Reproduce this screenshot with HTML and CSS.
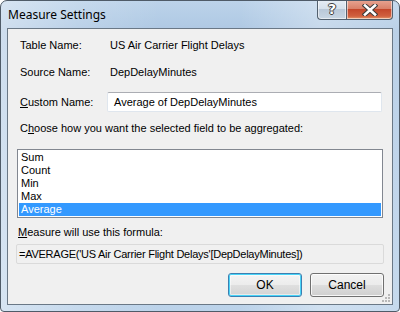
FILE: index.html
```html
<!DOCTYPE html>
<html>
<head>
  <meta name="viewport" content="width=device-width, initial-scale=1">
  <link rel="stylesheet" href="styles.css">
</head>
<body>

  <!-- Dialog window -->
  <div class="window">

    <!-- Title bar -->
    <div class="titlebar">
      <span class="title">Measure Settings</span>
      <div class="caption-buttons">
        <div class="cap-btn help-btn">?</div>
        <div class="cap-btn close-btn">
          <svg width="16" height="12" viewBox="0 0 16 12">
            <path d="M3 1.5 L13 10.5 M13 1.5 L3 10.5" stroke="#3b3b3b" stroke-width="4.6" stroke-linecap="square"/>
            <path d="M3 1.5 L13 10.5 M13 1.5 L3 10.5" stroke="#fff" stroke-width="2.6" stroke-linecap="square"/>
          </svg>
        </div>
      </div>
    </div>

    <!-- Client area -->
    <div class="client">
      <div class="info-row">
        <span class="label">Table Name:</span>
        <span class="value">US Air Carrier Flight Delays</span>
      </div>
      <div class="info-row">
        <span class="label">Source Name:</span>
        <span class="value">DepDelayMinutes</span>
      </div>
      <div class="custom-row">
        <span class="label"><u>C</u>ustom Name:</span>
        <div class="textbox">Average of DepDelayMinutes</div>
      </div>

      <div class="prompt">C<u>h</u>oose how you want the selected field to be aggregated:</div>
      <ul class="listbox">
        <li>Sum</li>
        <li>Count</li>
        <li>Min</li>
        <li>Max</li>
        <li class="selected">Average</li>
      </ul>

      <div class="formula-label"><u>M</u>easure will use this formula:</div>
      <div class="formula">=AVERAGE('US Air Carrier Flight Delays'[DepDelayMinutes])</div>

      <div class="buttons">
        <div class="btn default">OK</div>
        <div class="btn">Cancel</div>
      </div>

      <!-- Resize grip -->
      <svg class="grip" width="9" height="9" viewBox="0 0 9 9">
        <g fill="#b8b8b8">
          <rect x="7" y="1" width="2" height="2"/>
          <rect x="4" y="4" width="2" height="2"/>
          <rect x="7" y="4" width="2" height="2"/>
          <rect x="1" y="7" width="2" height="2"/>
          <rect x="4" y="7" width="2" height="2"/>
          <rect x="7" y="7" width="2" height="2"/>
        </g>
      </svg>
    </div>
  </div>

</body>
</html>
```

FILE: styles.css
```css
/* =====================
   BASIC
   ===================== */
body {
  margin: 0;
  background: #fff;
  font-family: "Liberation Sans", Arial, sans-serif;
  font-size: 11px;
  color: #000;
}
* {
  box-sizing: border-box;
}

/* =====================
   WINDOW FRAME
   ===================== */
.window {
  width: 400px;
  height: 312px;
  border: 1px solid #4f5b68;
  border-radius: 7px 7px 4px 4px;
  padding: 0 6px 6px 6px;
  display: flex;
  flex-direction: column;
  background:
    linear-gradient(90deg, rgba(255,255,255,0.4) 0%, rgba(255,255,255,0.15) 20%, rgba(255,255,255,0) 40%, rgba(255,255,255,0) 60%, rgba(255,255,255,0.3) 80%, rgba(255,255,255,0.15) 100%),
    linear-gradient(180deg, #bcd3ea 0%, #aec8e3 30px, #bcd3ea 100%);
  overflow: hidden;
}

.titlebar {
  height: 27px;
  display: flex;
  justify-content: space-between;
  align-items: flex-start;
}
.title {
  font-family: "Noto Sans", "Open Sans", sans-serif;
  font-size: 12px;
  line-height: 16px;
  margin-top: 6px;
  margin-left: 1px;
  color: #000;
}

.caption-buttons {
  display: flex;
  margin-top: -1px;
}
.cap-btn {
  height: 20px;
  border: 1px solid #52606e;
  border-top: none;
  display: flex;
  align-items: center;
  justify-content: center;
  box-shadow: inset 0 0 0 1px rgba(255,255,255,0.55);
}
.help-btn {
  width: 29px;
  border-radius: 0 0 0 4px;
  border-right: none;
  background: linear-gradient(180deg, #e6edf5 0%, #d6e1ec 45%, #b9c8d8 50%, #c9d6e3 100%);
  font-family: "DejaVu Sans", sans-serif;
  font-weight: bold;
  font-size: 14px;
  color: #fff;
  text-shadow: 0 0 1px #333, 1px 0 0 #444, -1px 0 0 #444, 0 1px 0 #444, 0 -1px 0 #444;
  padding-bottom: 1px;
}
.close-btn {
  width: 47px;
  border-radius: 0 0 4px 0;
  background: linear-gradient(180deg, #e8a593 0%, #d9816a 45%, #c4472b 50%, #d0603f 85%, #e59a6c 100%);
}

/* =====================
   CLIENT AREA
   ===================== */
.client {
  position: relative;
  flex: 1;
  background: #f0f0f0;
  border: 1px solid #6a7886;
  padding: 10px 8px 0 8px;
}

.info-row {
  display: flex;
  height: 13px;
  line-height: 13px;
  margin-bottom: 14px;
}
.label {
  width: 91px;
  padding-left: 4px;
  flex-shrink: 0;
}
.value {
  padding-left: 3px;
}

.custom-row {
  display: flex;
  align-items: center;
  height: 20px;
  margin-top: -1px;
  line-height: 13px;
}
.textbox {
  width: 275px;
  height: 20px;
  background: #fff;
  border: 1px solid #dfe6ee;
  border-top-color: #abadb3;
  border-radius: 2px;
  padding: 2px 0 0 6px;
  line-height: 14px;
}

.prompt {
  margin-top: 10px;
  padding-left: 4px;
  line-height: 13px;
}

.listbox {
  list-style: none;
  margin: 14px 1px 0 1px;
  padding: 1px 1px;
  height: 69px;
  background: #fff;
  border: 1px solid #828790;
}
.listbox li {
  height: 13px;
  line-height: 13px;
  padding-left: 2px;
}
.listbox li.selected {
  background: #3399ff;
  color: #fff;
}

.formula-label {
  margin-top: 8px;
  padding-left: 2px;
  line-height: 13px;
}
.formula {
  margin-top: 5px;
  height: 20px;
  border: 1px solid #dadada;
  border-radius: 2px;
  padding: 3px 0 0 2px;
  line-height: 13px;
  letter-spacing: -0.25px;
  background: #f0f0f0;
}

/* =====================
   BUTTONS
   ===================== */
.buttons {
  display: flex;
  justify-content: flex-end;
  gap: 8px;
  margin-top: 9px;
}
.btn {
  width: 74px;
  height: 24px;
  border: 1px solid #707070;
  border-radius: 3px;
  display: flex;
  align-items: center;
  justify-content: center;
  font-size: 12px;
  background: linear-gradient(180deg, #f2f2f2 0%, #ebebeb 48%, #dddddd 52%, #cfcfcf 100%);
  box-shadow: inset 0 0 0 1px rgba(255,255,255,0.8);
}
.btn.default {
  border-color: #3c7fb1;
  box-shadow: inset 0 0 0 1px #48d4f8, inset 0 0 0 2px rgba(255,255,255,0.5);
  background: linear-gradient(180deg, #f4f4f4 0%, #ececec 48%, #dfdfdf 52%, #d3d3d3 100%);
}

.grip {
  position: absolute;
  right: 2px;
  bottom: 2px;
}
```
